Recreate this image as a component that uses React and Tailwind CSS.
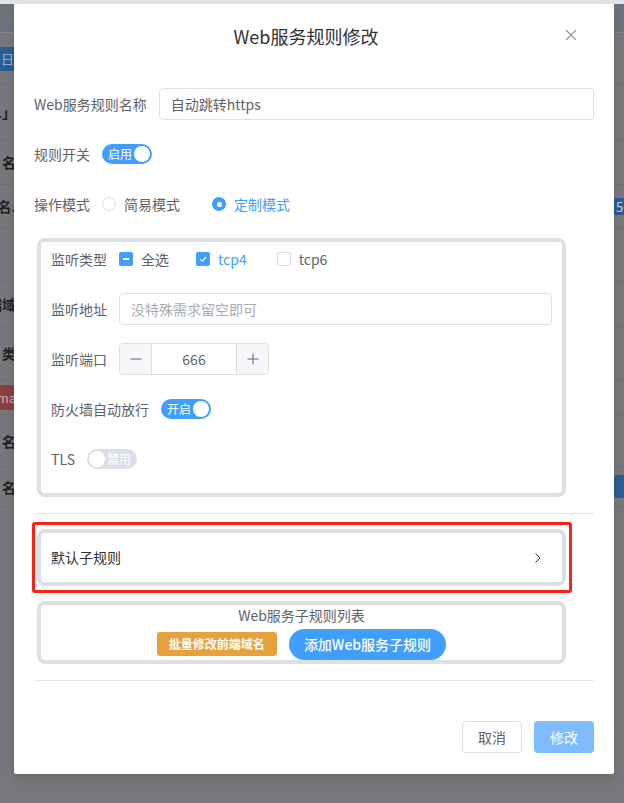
import React from 'react';

const BgRow = ({ h, left, right, className = '' }) => (
  <div className={`flex justify-between items-center border-b border-[#6e7073] ${className}`} style={{ height: h }}>
    <div className="w-[16px] h-full flex items-center justify-end overflow-hidden">{left}</div>
    <div className="w-[10px] h-full flex items-center overflow-hidden">{right}</div>
  </div>
);

const Dark = ({ children }) => (
  <span className="whitespace-nowrap text-[14px] font-bold text-[#1f2023] leading-none">{children}</span>
);

function Switch({ on, text }) {
  if (on) {
    return (
      <div className="h-[20px] w-[50px] rounded-full bg-[#409eff] flex items-center pl-[6px] pr-[2px]">
        <span className="flex-1 text-[12px] leading-none text-white">{text}</span>
        <span className="w-[16px] h-[16px] rounded-full bg-white" />
      </div>
    );
  }
  return (
    <div className="h-[20px] w-[50px] rounded-full bg-[#dcdfe6] flex items-center pl-[2px] pr-[6px]">
      <span className="w-[16px] h-[16px] rounded-full bg-white" />
      <span className="flex-1 text-right text-[12px] leading-none text-white">{text}</span>
    </div>
  );
}

function Checkbox({ state, label, active, className = '' }) {
  return (
    <div className={`flex items-center ${className}`}>
      {state === 'off' ? (
        <span className="w-[14px] h-[14px] rounded-[2px] border border-[#dcdfe6] bg-white" />
      ) : (
        <span className="w-[14px] h-[14px] rounded-[2px] bg-[#409eff] flex items-center justify-center">
          {state === 'half' ? (
            <span className="w-[6px] h-[2px] bg-white" />
          ) : (
            <svg width="10" height="10" viewBox="0 0 10 10" fill="none">
              <path d="M2.2 5.1 L4.3 7.1 L7.9 3" stroke="white" strokeWidth="1.3" />
            </svg>
          )}
        </span>
      )}
      <span className={`ml-[8px] text-[14px] leading-[20px] ${active ? 'text-[#409eff]' : 'text-[#606266]'}`}>{label}</span>
    </div>
  );
}

function Radio({ checked, label, className = '' }) {
  return (
    <div className={`flex items-center ${className}`}>
      {checked ? (
        <span className="w-[14px] h-[14px] rounded-full bg-[#409eff] flex items-center justify-center">
          <span className="w-[5px] h-[5px] rounded-full bg-white" />
        </span>
      ) : (
        <span className="w-[14px] h-[14px] rounded-full border border-[#dcdfe6] bg-white" />
      )}
      <span className={`ml-[8px] text-[14px] leading-[20px] ${checked ? 'text-[#409eff]' : 'text-[#606266]'}`}>{label}</span>
    </div>
  );
}

const Item = ({ label, children }) => (
  <div className="flex items-center h-[32px] mb-[18px]">
    <span className="pr-[12px] text-[14px] leading-[32px] text-[#606266] whitespace-nowrap">{label}</span>
    {children}
  </div>
);

export default function App() {
  return (
    <div className="relative w-[624px] h-[803px] overflow-hidden bg-[#76787b] font-['Noto_Sans_CJK_SC',sans-serif]">
      {/* dimmed page behind the dialog */}
      <div className="absolute inset-0 flex flex-col">
        <div className="h-[4px] bg-[#e4e5e7]" />
        <div className="h-[29px] bg-[#6c737b] border-b border-[#80858b]" />
        <BgRow h={52} left={
          <span className="whitespace-nowrap h-[24px] pr-[2px] bg-[#2c5c92] text-[#8fb4e0] text-[13px] leading-[24px]">务日</span>
        } />
        <BgRow h={55} left={<Dark>1」</Dark>} />
        <BgRow h={45} left={<Dark>名</Dark>} />
        <BgRow h={43} left={<Dark>名.</Dark>} right={
          <span className="whitespace-nowrap h-[17px] pl-[2px] bg-[#2c5c92] text-[#c6d8ee] text-[13px] leading-[17px]">56</span>
        } />
        <BgRow h={54} left={null} className="bg-[#77787b]" />
        <BgRow h={45} left={<Dark>端域</Dark>} />
        <BgRow h={53} left={<Dark>类</Dark>} />
        <BgRow h={35} left={
          <span className="whitespace-nowrap h-[25px] bg-[#8a3f40] text-[#d9a3a6] text-[13px] leading-[25px]">tma</span>
        } />
        <BgRow h={52} left={<Dark>名</Dark>} />
        <BgRow h={40} left={<Dark>名</Dark>} right={
          <span className="w-[10px] h-[23px] rounded-l-[3px] bg-[#2c5c92]" />
        } />
      </div>

      {/* dialog */}
      <div className="absolute left-[14px] top-[4px] w-[600px] bg-white rounded-b-[2px] shadow-[0_4px_12px_rgba(0,0,0,0.12)]">
        <div className="relative pt-[20px] pb-[10px] pl-[20px] pr-[36px]">
          <h2 className="text-center text-[18px] leading-[24px] text-[#303133]">Web服务规则修改</h2>
          <svg className="absolute left-[551px] top-[25px]" width="12" height="12" viewBox="0 0 12 12" fill="none">
            <path d="M1 1 L11 11 M11 1 L1 11" stroke="#909399" strokeWidth="1.1" />
          </svg>
        </div>

        <div className="px-[20px] pt-[30px]">
          <Item label="Web服务规则名称">
            <div className="flex-1 h-[32px] rounded-[4px] border border-[#dcdfe6] px-[11px] flex items-center text-[14px] text-[#606266]">自动跳转https</div>
          </Item>
          <Item label="规则开关">
            <Switch on text="启用" />
          </Item>
          <Item label="操作模式">
            <Radio label="简易模式" className="mr-[32px]" />
            <Radio checked label="定制模式" />
          </Item>

          <div className="ml-[3px] w-[529px] border-4 border-[#dcdfe6] rounded-[8px] px-[10px] pt-px">
            <Item label="监听类型">
              <Checkbox state="half" label="全选" className="mr-[27px]" />
              <Checkbox state="on" label="tcp4" active className="mr-[30px]" />
              <Checkbox state="off" label="tcp6" />
            </Item>
            <Item label="监听地址">
              <div className="flex-1 h-[32px] rounded-[4px] border border-[#dcdfe6] px-[11px] flex items-center text-[14px] text-[#a8abb2]">没特殊需求留空即可</div>
            </Item>
            <Item label="监听端口">
              <div className="w-[150px] h-[32px] rounded-[4px] border border-[#dcdfe6] flex">
                <div className="w-[32px] h-full bg-[#f5f7fa] border-r border-[#dcdfe6] rounded-l-[4px] flex items-center justify-center">
                  <svg width="12" height="12" viewBox="0 0 12 12"><path d="M0.5 6 H11.5" stroke="#606266" strokeWidth="1" /></svg>
                </div>
                <div className="flex-1 flex items-center justify-center text-[14px] text-[#606266]">666</div>
                <div className="w-[32px] h-full bg-[#f5f7fa] border-l border-[#dcdfe6] rounded-r-[4px] flex items-center justify-center">
                  <svg width="12" height="12" viewBox="0 0 12 12"><path d="M0.5 6 H11.5 M6 0.5 V11.5" stroke="#606266" strokeWidth="1" /></svg>
                </div>
              </div>
            </Item>
            <Item label="防火墙自动放行">
              <Switch on text="开启" />
            </Item>
            <Item label="TLS">
              <Switch text="禁用" />
            </Item>
          </div>

          <div className="mt-[16px] h-px bg-[#e4e7ed]" />

          <div className="relative mt-[15px] ml-[3px] w-[529px]">
            <div className="h-[57px] border-4 border-[#dcdfe6] rounded-[8px] pl-[10px] pr-[20px] flex items-center justify-between">
              <span className="text-[14px] text-[#303133]">默认子规则</span>
              <svg width="8" height="12" viewBox="0 0 8 12" fill="none">
                <path d="M1.5 1.5 L6 6 L1.5 10.5" stroke="#303133" strokeWidth="1" />
              </svg>
            </div>
            <span className="absolute -left-[5px] -top-[7px] -right-[6px] -bottom-[7px] border-[3px] border-[#fa2216] rounded-[3px]" />
          </div>

          <div className="mt-[15px] ml-[3px] w-[529px] border-4 border-[#dcdfe6] rounded-[8px] flex flex-col items-center">
            <span className="text-[14px] leading-[20px] text-[#606266]">Web服务子规则列表</span>
            <div className="mt-[3px] h-[32px] flex items-center gap-[12px]">
              <span className="h-[24px] px-[12px] rounded-[3px] bg-[#e6a23c] text-white text-[12px] font-bold leading-[24px]">批量修改前端域名</span>
              <span className="h-[31px] px-[15px] rounded-full bg-[#409eff] text-white text-[14px] font-medium leading-[31px]">添加Web服务子规则</span>
            </div>
          </div>

          <div className="mt-[16px] h-px bg-[#e4e7ed]" />
        </div>

        <div className="px-[20px] pt-[40px] pb-[21px] flex justify-end gap-[12px]">
          <span className="w-[60px] h-[32px] rounded-[4px] border border-[#dcdfe6] flex items-center justify-center text-[14px] text-[#606266]">取消</span>
          <span className="w-[60px] h-[32px] rounded-[4px] bg-[#7ebcff] flex items-center justify-center text-[14px] text-white">修改</span>
        </div>
      </div>
    </div>
  );
}
